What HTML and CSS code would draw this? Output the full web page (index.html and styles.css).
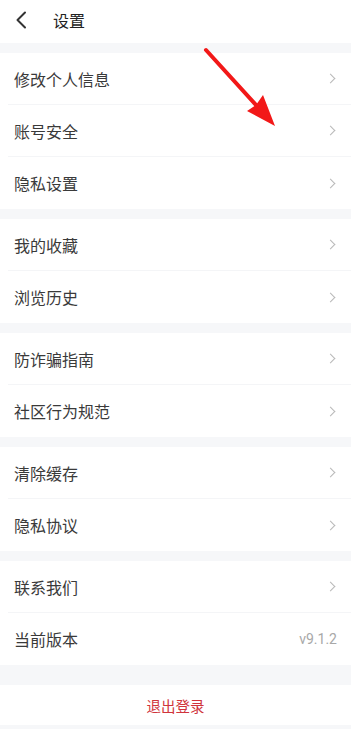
FILE: index.html
```html
<!DOCTYPE html>
<html lang="zh">
<head>
<meta charset="utf-8">
<link rel="stylesheet" href="styles.css">
</head>
<body>
<div class="page">
  <header class="header">
    <svg class="back" width="12" height="18" viewBox="0 0 12 18"><path d="M10 1.5 L2.5 9 L10 16.5" fill="none" stroke="#333" stroke-width="2" stroke-linecap="round" stroke-linejoin="round"/></svg>
    <span class="title">设置</span>
  </header>

  <section class="group">
    <div class="row"><span class="label">修改个人信息</span><span class="chev"></span></div>
    <div class="row"><span class="label">账号安全</span><span class="chev"></span></div>
    <div class="row"><span class="label">隐私设置</span><span class="chev"></span></div>
  </section>

  <section class="group">
    <div class="row"><span class="label">我的收藏</span><span class="chev"></span></div>
    <div class="row"><span class="label">浏览历史</span><span class="chev"></span></div>
  </section>

  <section class="group">
    <div class="row"><span class="label">防诈骗指南</span><span class="chev"></span></div>
    <div class="row"><span class="label">社区行为规范</span><span class="chev"></span></div>
  </section>

  <section class="group">
    <div class="row"><span class="label">清除缓存</span><span class="chev"></span></div>
    <div class="row"><span class="label">隐私协议</span><span class="chev"></span></div>
  </section>

  <section class="group">
    <div class="row"><span class="label">联系我们</span><span class="chev"></span></div>
    <div class="row"><span class="label">当前版本</span><span class="version">v9.1.2</span></div>
  </section>

  <section class="logout">退出登录</section>

  <svg class="arrow" width="351" height="140" viewBox="0 0 351 140">
    <line x1="206" y1="50" x2="266" y2="116" stroke="#f21818" stroke-width="4" stroke-linecap="round"/>
    <polygon points="275,126 247,111 256,105 263,95" fill="#f21818"/>
  </svg>
</div>
</body>
</html>
```
FILE: styles.css
```css
* { box-sizing: border-box; }
html, body {
  margin: 0;
  padding: 0;
  background: #f6f7f9;
}
body {
  font-family: "Noto Sans CJK SC", "Noto Sans", sans-serif;
}
.page {
  position: relative;
  width: 351px;
  height: 729px;
  overflow: hidden;
  background: #f6f7f9;
}
.header {
  height: 43px;
  background: #fff;
  display: flex;
  align-items: center;
  padding-left: 15px;
}
.back { display: block; margin-top: -4px; }
.title {
  margin-left: 26px;
  font-size: 16px;
  color: #222;
  margin-top: -4px;
}
.group {
  background: #fff;
  margin-top: 10px;
  padding-left: 8px;
}
.row {
  height: 52px;
  display: flex;
  align-items: center;
  justify-content: space-between;
  padding-left: 6px;
  padding-right: 14px;
  border-bottom: 1px solid #f4f5f7;
}
.row:last-child { border-bottom: none; }
.label {
  font-size: 16px;
  color: #3a3a3a;
  line-height: 1;
}
.chev {
  width: 7px;
  height: 7px;
  border-top: 1.3px solid #b8b8b8;
  border-right: 1.3px solid #b8b8b8;
  transform: rotate(45deg);
  margin-right: 3px;
}
.version {
  font-family: "Roboto", "Noto Sans", sans-serif;
  font-size: 14px;
  color: #a8a8a8;
}
.logout {
  margin-top: 20px;
  height: 40px;
  background: #fff;
  display: flex;
  align-items: center;
  justify-content: center;
  font-size: 14.5px;
  color: #d0343c;
}
.arrow {
  position: absolute;
  left: 0;
  top: 0;
  pointer-events: none;
}
```
